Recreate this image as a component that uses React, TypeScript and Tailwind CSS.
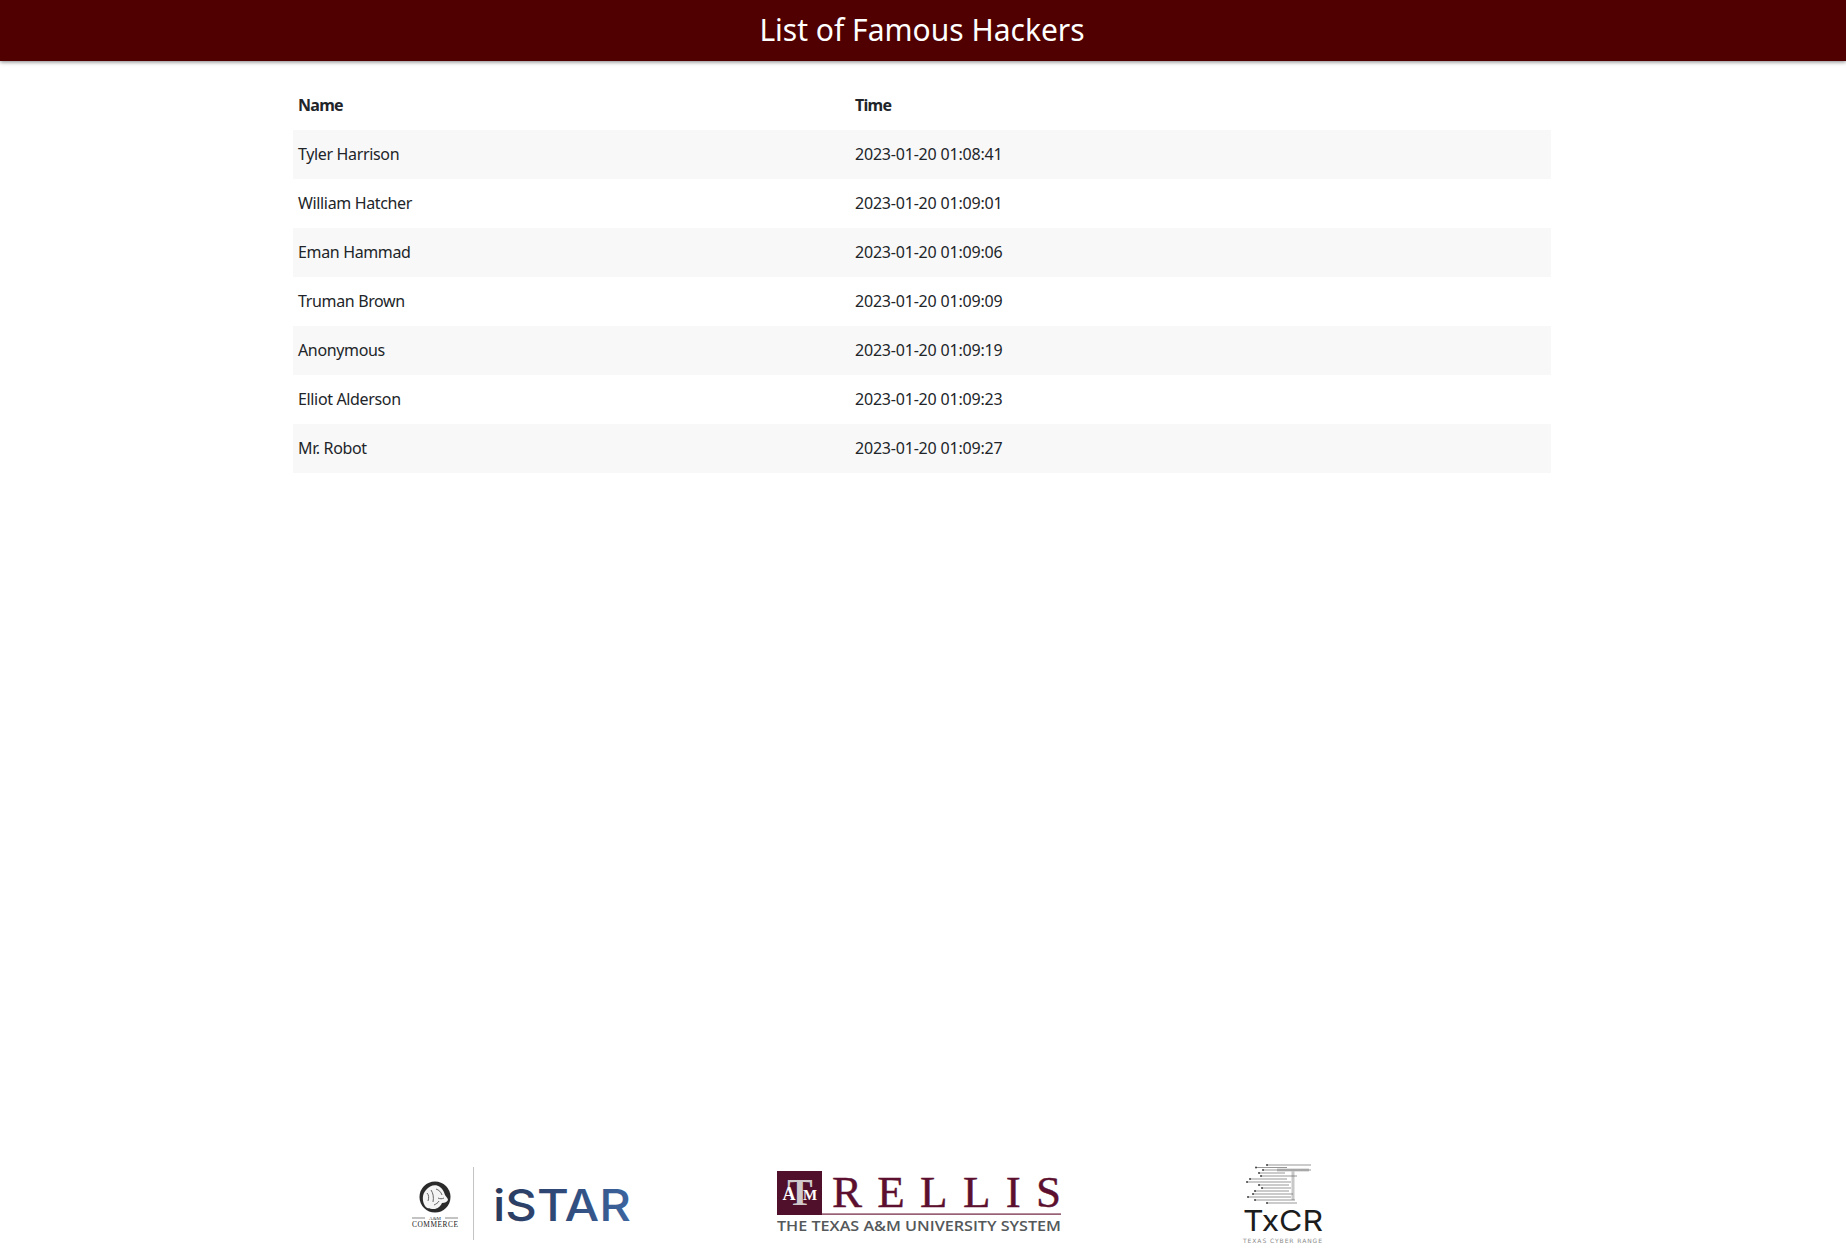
import React from "react";

const hackers = [
  { name: "Tyler Harrison", time: "2023-01-20 01:08:41" },
  { name: "William Hatcher", time: "2023-01-20 01:09:01" },
  { name: "Eman Hammad", time: "2023-01-20 01:09:06" },
  { name: "Truman Brown", time: "2023-01-20 01:09:09" },
  { name: "Anonymous", time: "2023-01-20 01:09:19" },
  { name: "Elliot Alderson", time: "2023-01-20 01:09:23" },
  { name: "Mr. Robot", time: "2023-01-20 01:09:27" },
];

function IstarLogo() {
  return (
    <svg width="240" height="90" viewBox="0 0 240 90" className="shrink-0">
      {/* lion badge */}
      <circle cx="35" cy="37" r="15.5" fill="#2a2a2a" />
      <path
        d="M25 46c-3-5-3-12 1-16 4-5 10-6 14-3 3 2 4 5 5 8 1 2 3 3 3 5-1 2-3 3-6 3-1 2-3 5-7 6-4 0-8 0-10-3z"
        fill="#f4f4f4"
      />
      <path d="M27 33c2 2 2 5 1 8M31 30c2 3 3 7 2 12M36 29c3 1 5 3 6 6M38 38c2 1 4 1 6 0M34 45c2-1 4-2 5-4" stroke="#555" strokeWidth="0.9" fill="none" />
      <path d="M12 58h13M45 58h13" stroke="#555" strokeWidth="0.7" />
      <text x="35" y="60" textAnchor="middle" fontFamily="Liberation Serif, serif" fontSize="5" fill="#333">
        A&amp;M
      </text>
      <text x="35" y="67" textAnchor="middle" fontFamily="Liberation Serif, serif" fontSize="7.4" fill="#222" textLength="46">
        COMMERCE
      </text>
      <rect x="73" y="7" width="1" height="73" fill="#c4c4c4" />
      <defs>
        <linearGradient id="istar" x1="0" x2="1" y1="0" y2="0">
          <stop offset="0" stopColor="#2b3a5c" />
          <stop offset="0.5" stopColor="#2f4a7a" />
          <stop offset="1" stopColor="#3d659f" />
        </linearGradient>
      </defs>
      <text
        x="93"
        y="61"
        fontFamily="Inter, sans-serif"
        fontWeight="500"
        fontSize="44"
        fill="url(#istar)"
        textLength="138"
        lengthAdjust="spacingAndGlyphs"
      >
        iSTAR
      </text>
    </svg>
  );
}

function RellisLogo() {
  return (
    <svg width="300" height="90" viewBox="0 0 300 90" className="shrink-0">
      <rect x="7" y="11" width="45" height="44" fill="#500f2b" />
      <text fontFamily="Liberation Serif, serif" fontWeight="700" textAnchor="middle">
        <tspan x="30" y="45" fontSize="38" fill="#cfc9cb">T</tspan>
        <tspan x="19" y="40" fontSize="18" fill="#ffffff">A</tspan>
        <tspan x="40" y="40" fontSize="15" fill="#ffffff">M</tspan>
      </text>
      <rect x="52" y="53.5" width="239" height="1.2" fill="#6d1f3c" />
      <text x="62" y="47" fontFamily="Liberation Serif, serif" fontSize="45" fill="#5c0f2e" stroke="#5c0f2e" strokeWidth="0.4" textLength="229">
        RELLIS
      </text>
      <text x="7" y="71" fontFamily="Open Sans, sans-serif" fontWeight="600" fontSize="14" fill="#54585a" textLength="284" lengthAdjust="spacingAndGlyphs">
        THE TEXAS A&amp;M UNIVERSITY SYSTEM
      </text>
    </svg>
  );
}

function TxcrLogo() {
  const lines = [
    [32, 5, 76], [21, 7.5, 52], [28, 10, 76], [24, 13, 50], [26, 16, 62], [15, 19, 52], [12, 22, 56], [24, 25, 54],
    [27, 28, 56], [20, 31, 54], [18, 34, 58], [13, 37, 56], [20, 40, 60], [32, 43, 62],
  ];
  return (
    <svg width="95" height="90" viewBox="0 0 95 90" className="shrink-0">
      <path d="M42 10H74M58 10V40" stroke="#c8c8c8" strokeWidth="3" fill="none" />
      <g stroke="#6a6a6a" strokeWidth="0.7" fill="none">
        {lines.map(([x1, y, x2], i) => (
          <path key={i} d={`M${x1} ${y}H${x2}`} />
        ))}
      </g>
      <g fill="#333">
        {lines.map(([x1, y], i) => (
          <circle key={i} cx={x1} cy={y} r="0.9" />
        ))}
      </g>
      <text x="8" y="71" fontFamily="Inter, sans-serif" fontWeight="400" fontSize="29" fill="#1c1c1c" textLength="80" lengthAdjust="spacingAndGlyphs">
        TxCR
      </text>
      <text x="8" y="83" fontFamily="DejaVu Sans, sans-serif" fontSize="6" fill="#8a8a8a" textLength="79">
        TEXAS CYBER RANGE
      </text>
    </svg>
  );
}

export default function App() {
  return (
    <div className="flex min-h-screen flex-col bg-white font-['Noto_Sans',sans-serif] text-[#212529]">
      <header className="flex h-[61px] items-center justify-center bg-[#500000] pr-[2px] pb-[2px] shadow-[0_1px_4px_rgba(0,0,0,0.5)]">
        <h1 className="text-[30px] leading-none text-white">List of Famous Hackers</h1>
      </header>

      <main className="mt-5 ml-[293px] w-[1258px]">
        <table className="w-full table-fixed border-collapse text-[16px]">
          <thead>
            <tr className="h-[49px] text-left">
              <th className="w-[557px] px-[5px] pb-[1px] font-bold tracking-[-0.7px]">Name</th>
              <th className="px-[5px] pb-[1px] font-bold tracking-[-0.7px]">Time</th>
            </tr>
          </thead>
          <tbody>
            {hackers.map((h) => (
              <tr key={h.name} className="h-[49px] odd:bg-[#f8f8f8]">
                <td className="px-[5px] pb-[1px] tracking-[-0.35px]">{h.name}</td>
                <td className="px-[5px] pb-[1px] tracking-[-0.2px]">{h.time}</td>
              </tr>
            ))}
          </tbody>
        </table>
      </main>

      <footer className="mt-auto flex h-[91px] items-start pl-[400px]">
        <IstarLogo />
        <div className="ml-[130px]">
          <RellisLogo />
        </div>
        <div className="ml-[165px]">
          <TxcrLogo />
        </div>
      </footer>
    </div>
  );
}
